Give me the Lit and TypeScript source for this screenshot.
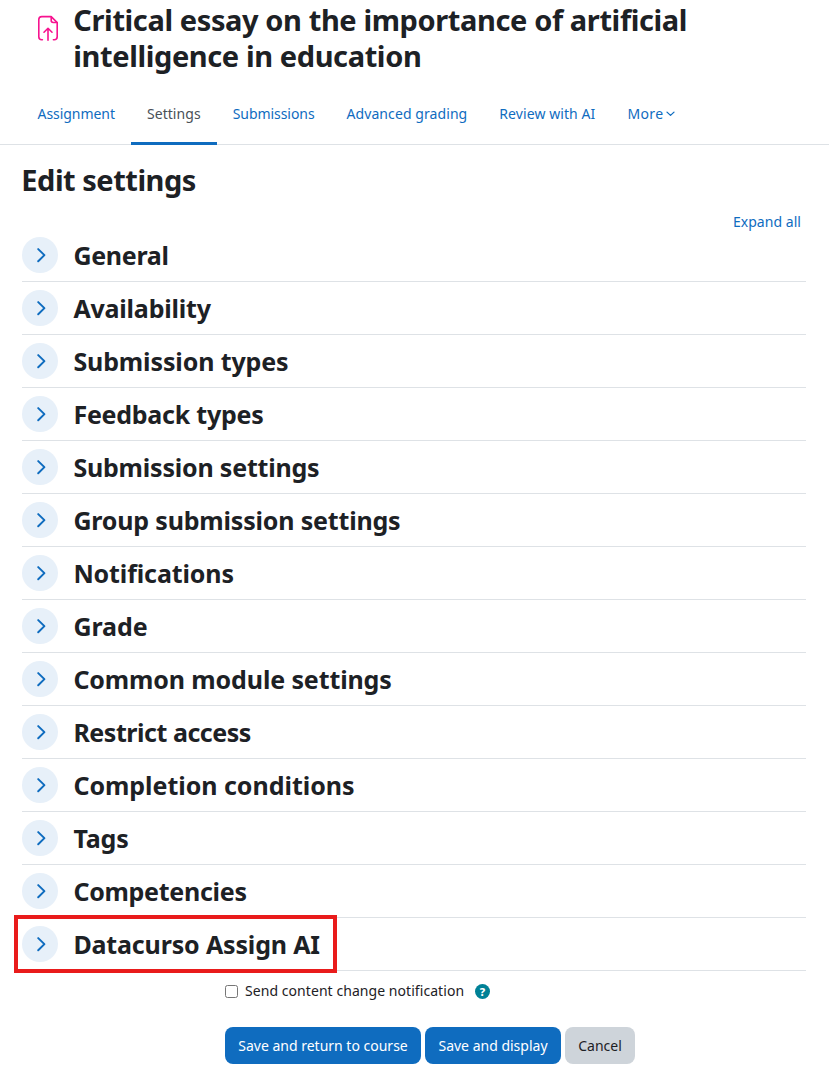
import { LitElement, html, css, svg } from "lit";
import { customElement, property } from "lit/decorators.js";
import { classMap } from "lit/directives/class-map.js";
import { styleMap } from "lit/directives/style-map.js";

interface Label {
  text: string;
  tracking: number;
}

const TABS: Label[] = [
  { text: "Assignment", tracking: -0.05 },
  { text: "Settings", tracking: 0.06 },
  { text: "Submissions", tracking: -0.06 },
  { text: "Advanced grading", tracking: 0.08 },
  { text: "Review with AI", tracking: 0.08 },
];

const SECTIONS: Label[] = [
  { text: "General", tracking: -0.3 },
  { text: "Availability", tracking: -0.2 },
  { text: "Submission types", tracking: -0.12 },
  { text: "Feedback types", tracking: -0.24 },
  { text: "Submission settings", tracking: -0.2 },
  { text: "Group submission settings", tracking: -0.18 },
  { text: "Notifications", tracking: -0.12 },
  { text: "Grade", tracking: -0.05 },
  { text: "Common module settings", tracking: -0.12 },
  { text: "Restrict access", tracking: -0.46 },
  { text: "Completion conditions", tracking: -0.03 },
  { text: "Tags", tracking: -0.1 },
  { text: "Competencies", tracking: -0.28 },
  { text: "Datacurso Assign AI", tracking: -0.16 },
];

const spacing = (label: Label) => styleMap({ letterSpacing: `${label.tracking}px` });

@customElement("settings-section")
export class SettingsSection extends LitElement {
  @property({ attribute: false }) label: Label = { text: "", tracking: 0 };
  @property({ type: Boolean }) highlighted = false;

  static styles = css`
    :host {
      display: block;
    }
    .row {
      position: relative;
      display: flex;
      align-items: center;
      gap: 15.4px;
      height: 52px;
      border-bottom: 1px solid #dee2e6;
    }
    .toggle {
      display: flex;
      align-items: center;
      justify-content: center;
      width: 36px;
      height: 36px;
      padding: 0;
      border: 0;
      border-radius: 50%;
      background: #e7f0f9;
    }
    .toggle svg {
      display: block;
    }
    .title {
      margin: 0;
      font-size: 25px;
      font-weight: 700;
      line-height: 36px;
      white-space: nowrap;
    }
    .frame {
      position: absolute;
      left: -8px;
      top: -3.5px;
      width: 323px;
      height: 58.5px;
      box-sizing: border-box;
      border: 4px solid #e91b1b;
      pointer-events: none;
    }
  `;

  render() {
    return html`
      <div class="row">
        <button class="toggle" aria-label="Expand">
          <svg width="36" height="36" viewBox="0 0 36 36" fill="none">
            <path d="M16.2 12.1 L22.4 18.1 L16.2 24.2" stroke="#0f6cbf" stroke-width="2" stroke-linecap="round" stroke-linejoin="round" />
          </svg>
        </button>
        <h3 class="title" style=${spacing(this.label)}>${this.label.text}</h3>
        ${this.highlighted ? html`<div class="frame"></div>` : null}
      </div>
    `;
  }
}

@customElement("app-root")
export class AppRoot extends LitElement {
  static styles = css`
    :host {
      display: block;
      height: 1080px;
      overflow: hidden;
      box-sizing: border-box;
      background: #fff;
      color: #1d2125;
      font-family: "Noto Sans", "Open Sans", sans-serif;
      font-size: 14px;
      line-height: 22px;
    }
    .header {
      display: flex;
      gap: 13.3px;
      height: 82px;
      box-sizing: border-box;
      padding: 2px 22px 0 36px;
    }
    .header svg {
      flex: none;
      margin-top: 12px;
    }
    .heading {
      margin: 0;
      font-size: 29px;
      font-weight: 700;
      line-height: 36px;
      letter-spacing: -0.39px;
    }
    .tabs {
      display: flex;
      height: 62px;
      padding-left: 21.5px;
      margin-right: 1px;
      border-bottom: 1px solid #dee2e6;
    }
    .tab {
      display: flex;
      align-items: center;
      gap: 3px;
      height: 63px;
      box-sizing: border-box;
      padding: 3px 16px 0;
      border-bottom: 3px solid transparent;
      color: #0f6cbf;
      white-space: nowrap;
    }
    .tab.active {
      color: #495057;
      border-bottom-color: #0f6cbf;
    }
    .more {
      letter-spacing: 0.35px;
    }
    .content {
      padding: 17px 24px 0 22px;
    }
    .title {
      margin-left: -0.7px;
      letter-spacing: -0.48px;
    }
    .expand {
      margin: 13px 5px 0 0;
      height: 18px;
      line-height: 22px;
      text-align: right;
      color: #0f6cbf;
      letter-spacing: 0.04px;
    }
    .actions {
      padding: 9px 0 0 203px;
    }
    .notify {
      display: flex;
      align-items: center;
      height: 22px;
    }
    .box {
      width: 13px;
      height: 13px;
      box-sizing: border-box;
      margin-right: 7px;
      border: 1px solid #767676;
      border-radius: 2.5px;
    }
    .notify-label {
      letter-spacing: 0.06px;
    }
    .help {
      display: flex;
      align-items: center;
      justify-content: center;
      width: 15px;
      height: 15px;
      margin: 1px 0 0 10.8px;
      border-radius: 50%;
      background: #008196;
      color: #fff;
      font-size: 11px;
      font-weight: 800;
      line-height: 15px;
    }
    .buttons {
      display: flex;
      gap: 4px;
      margin-top: 25px;
    }
    .button {
      height: 37px;
      padding: 0;
      border: 0;
      border-radius: 8px;
      background: #0f6cbf;
      color: #fff;
      font: inherit;
      line-height: 37px;
      white-space: nowrap;
    }
    .return {
      width: 196px;
    }
    .display {
      width: 136px;
    }
    .cancel {
      width: 70px;
      background: #ced4da;
      color: #1d2125;
    }
  `;

  private assignIcon = svg`
    <g fill="none" stroke="#f7138f" stroke-width="1.6" stroke-linecap="round" stroke-linejoin="round">
      <path d="M6.4 25.8 H5.8 Q2.8 25.8 2.8 22.8 V5.6 Q2.8 2.6 5.8 2.6 H15.2 L21.2 8.6 V22.8 Q21.2 25.8 18.2 25.8 H17.4" />
      <path d="M15.2 2.9 V6.6 Q15.2 8.5 17.2 8.5 H21" />
      <path d="M12 26.3 V14.4 M8 18.2 L12 14.3 L16 18.2" />
    </g>`;

  render() {
    return html`
      <header class="header">
        <svg width="24" height="30" viewBox="0 0 24 30">${this.assignIcon}</svg>
        <h1 class="heading">Critical essay on the importance of artificial<br />intelligence in education</h1>
      </header>
      <nav class="tabs">
        ${TABS.map(
          (tab) => html`<a class=${classMap({ tab: true, active: tab.text === "Settings" })}><span style=${spacing(tab)}>${tab.text}</span></a>`
        )}
        <a class="tab">
          <span class="more">More</span>
          <svg width="9" height="6" viewBox="0 0 9 6" fill="none">
            <path d="M1 1.1 L4.5 4.4 L8 1.1" stroke="#0f6cbf" stroke-width="1.3" stroke-linecap="round" stroke-linejoin="round" />
          </svg>
        </a>
      </nav>
      <main class="content">
        <h2 class="heading title">Edit settings</h2>
        <div class="expand">Expand all</div>
        ${SECTIONS.map(
          (label, i) => html`<settings-section .label=${label} ?highlighted=${i === SECTIONS.length - 1}></settings-section>`
        )}
        <div class="actions">
          <div class="notify">
            <span class="box"></span>
            <span class="notify-label">Send content change notification</span>
            <span class="help">?</span>
          </div>
          <div class="buttons">
            <button class="button return">Save and return to course</button>
            <button class="button display">Save and display</button>
            <button class="button cancel">Cancel</button>
          </div>
        </div>
      </main>
    `;
  }
}
